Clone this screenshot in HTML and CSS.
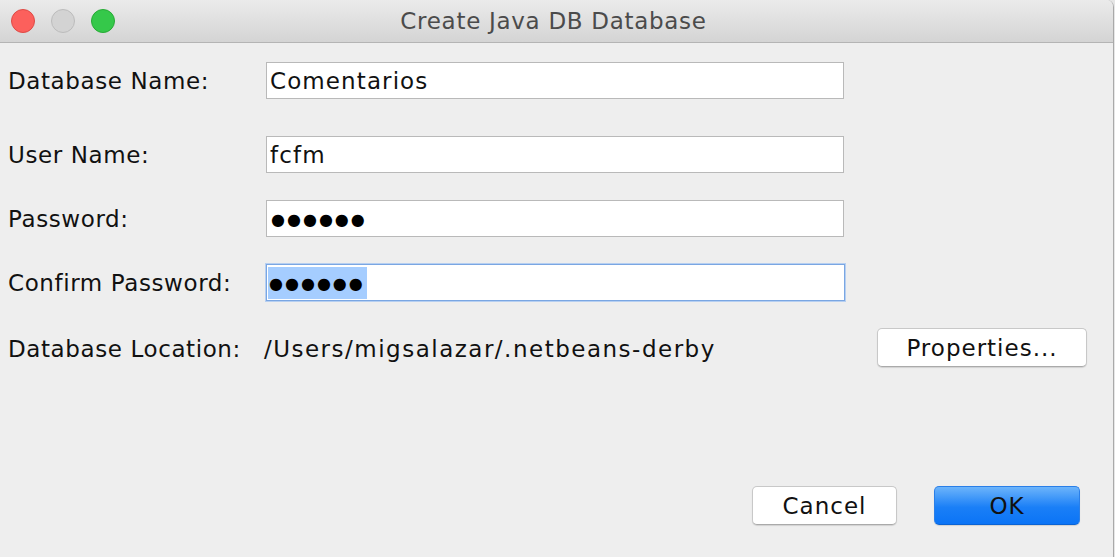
FILE: index.html
```html
<!DOCTYPE html>
<html>
<head>
<meta charset="utf-8">
<link rel="stylesheet" href="styles.css">
</head>
<body>
<div class="window">
  <div class="titlebar">
    <div class="lights">
      <span class="light red"></span>
      <span class="light grey"></span>
      <span class="light green"></span>
    </div>
    <div class="title">Create Java DB Database</div>
    <div class="spacer"></div>
  </div>
  <div class="form">
    <div class="row first">
      <div class="label">Database Name:</div>
      <div class="field">Comentarios</div>
    </div>
    <div class="row second">
      <div class="label">User Name:</div>
      <div class="field">fcfm</div>
    </div>
    <div class="row">
      <div class="label">Password:</div>
      <div class="field"><span class="dots">●●●●●●</span></div>
    </div>
    <div class="row">
      <div class="label">Confirm Password:</div>
      <div class="field focus"><span class="sel"><span class="dots">●●●●●●</span></span></div>
    </div>
    <div class="row location">
      <div class="loc-label">Database Location:</div>
      <div class="loc-path">/Users/migsalazar/.netbeans-derby</div>
      <button class="btn props">Properties...</button>
    </div>
  </div>
  <div class="footer">
    <button class="btn cancel">Cancel</button>
    <button class="btn ok">OK</button>
  </div>
</div>
</body>
</html>
```

FILE: styles.css
```css
html, body {
  margin: 0;
  padding: 0;
  background: #e6e6e6;
  width: 1115px;
  height: 557px;
  overflow: hidden;
}
body {
  font-family: "DejaVu Sans", "Liberation Sans", sans-serif;
  color: #111;
}
.window {
  width: 1113px;
  height: 557px;
  background: #eeeeee;
  border-right: 1px solid #a9a9a9;
  border-top-right-radius: 7px;
  overflow: hidden;
  display: flex;
  flex-direction: column;
}
.titlebar {
  height: 42px;
  flex: none;
  border-bottom: 1px solid #b4b4b4;
  background: linear-gradient(#ebebeb, #d4d4d4);
  display: grid;
  grid-template-columns: 1fr auto 1fr;
  align-items: center;
}
.lights {
  display: flex;
  gap: 16px;
  padding-left: 11px;
}
.light {
  width: 24px;
  height: 24px;
  border-radius: 50%;
  box-sizing: border-box;
}
.red { background: #fc605c; border: 1px solid #de4a45; }
.grey { background: #d3d3d3; border: 1px solid #bcbcbc; }
.green { background: #35c84a; border: 1px solid #27aa35; }
.title {
  font-size: 23px;
  color: #4b4b4b;
  letter-spacing: 0.7px;
  margin-left: -6px;
}
.form {
  padding: 19px 0 0 8px;
  display: flex;
  flex-direction: column;
  gap: 27px;
}
.row {
  display: flex;
  align-items: center;
  font-size: 23px;
  letter-spacing: 0.6px;
}
.row.second { margin-top: 10px; }
.label {
  width: 258px;
  flex: none;
}
.field {
  width: 578px;
  height: 37px;
  box-sizing: border-box;
  background: #fff;
  border: 1px solid #b9b9b9;
  display: flex;
  align-items: center;
  padding-left: 3px;
  letter-spacing: 1.1px;
}
.dots {
  font-size: 16px;
  letter-spacing: 2px;
  padding-left: 1px;
  color: #000;
  margin-top: 2px;
}
.field.focus {
  width: 579px;
  border: 1px solid #7aa6e2;
  box-shadow: 0 0 0 1px #b6cff1;
  padding-left: 1px;
}
.sel {
  background: #a5cdff;
  height: 32px;
  width: 99px;
  display: flex;
  align-items: center;
}
.location {
  height: 39px;
}
.loc-label { margin-top: 3px; }
.loc-path {
  margin-left: 23px;
  margin-top: 3px;
  letter-spacing: 1.5px;
}
.btn {
  font-family: "DejaVu Sans", "Liberation Sans", sans-serif;
  font-size: 23px;
  letter-spacing: 1px;
  color: #111;
  background: #fff;
  border: 1px solid #c8c8c8;
  border-bottom-color: #aaa;
  border-radius: 5px;
  height: 39px;
  padding: 0;
  box-shadow: 0 1px 1px rgba(0,0,0,0.12);
}
.props {
  width: 210px;
  margin-left: auto;
  margin-right: 26px;
}
.footer {
  margin-top: 119px;
  display: flex;
  justify-content: flex-end;
  gap: 37px;
  padding-right: 33px;
}
.cancel { width: 145px; }
.ok {
  width: 146px;
  background: linear-gradient(#6cb4fb, #1a7ff7 55%, #0b74f6);
  border: 1px solid #2a7fe8;
  border-bottom-color: #0a63d4;
}
```
